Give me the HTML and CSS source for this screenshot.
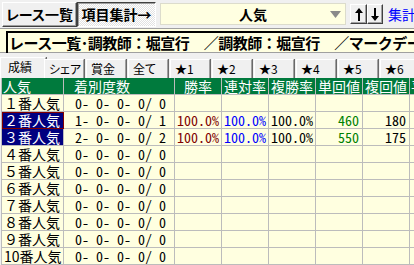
FILE: index.html
```html
<!DOCTYPE html>
<html lang="ja">
<head>
    <meta charset="UTF-8">
    <meta name="viewport" content="width=device-width, initial-scale=1.0">
    <title>項目集計</title>
    <link rel="stylesheet" href="styles.css">
</head>
<body>
    <div class="toolbar">
        <button class="btn btn-list">レース一覧</button>
        <button class="btn btn-on">項目集計→</button>
        <div class="combo">
            <span class="combo-text">人気</span>
            <svg class="combo-arrow" width="11" height="7" viewBox="0 0 11 7"><polygon points="0,0 11,0 5.5,7" fill="#8a8a8a"/></svg>
        </div>
        <div class="sort">
            <button class="sort-btn sort-up">
                <svg width="8" height="13" viewBox="0 0 8 13"><path d="M4 0 L8 5 H5 V13 H3 V5 H0 Z" fill="#000"/></svg>
            </button>
            <button class="sort-btn sort-down">
                <svg width="8" height="13" viewBox="0 0 8 13"><path d="M4 13 L8 8 H5 V0 H3 V8 H0 Z" fill="#000"/></svg>
            </button>
        </div>
        <span class="link">集計表示</span>
    </div>

    <div class="title">
        <div class="title-box">レース一覧･調教師：堀宣行　／調教師：堀宣行　／マークデータ</div>
    </div>

    <div class="tabs">
        <span class="tab tab-on">成績</span>
        <span class="tab">シェア</span>
        <span class="tab">賞金</span>
        <span class="tab">全て</span>
        <span class="tab">★1</span>
        <span class="tab">★2</span>
        <span class="tab">★3</span>
        <span class="tab">★4</span>
        <span class="tab">★5</span>
        <span class="tab">★6</span>
    </div>

    <div class="grid">
        <div class="cell head head-name">人気</div>
        <div class="cell head head-count">着別度数</div>
        <div class="cell head">勝率</div>
        <div class="cell head">連対率</div>
        <div class="cell head">複勝率</div>
        <div class="cell head">単回値</div>
        <div class="cell head">複回値</div>
        <div class="cell head head-cut">平均着順</div>

        <div class="cell name">１番人気</div>
        <div class="cell count">0- 0- 0- 0/ 0</div>
        <div class="cell"></div><div class="cell"></div><div class="cell"></div><div class="cell"></div><div class="cell"></div><div class="cell"></div>

        <div class="cell name name-sel name-focus">２番人気</div>
        <div class="cell count">1- 0- 0- 0/ 1</div>
        <div class="cell pct win">100.0%</div>
        <div class="cell pct place">100.0%</div>
        <div class="cell pct">100.0%</div>
        <div class="cell num ret">460</div>
        <div class="cell num">180</div>
        <div class="cell"></div>

        <div class="cell name name-sel">３番人気</div>
        <div class="cell count">2- 0- 0- 0/ 2</div>
        <div class="cell pct win">100.0%</div>
        <div class="cell pct place">100.0%</div>
        <div class="cell pct">100.0%</div>
        <div class="cell num ret">550</div>
        <div class="cell num">175</div>
        <div class="cell"></div>

        <div class="cell name">４番人気</div>
        <div class="cell count">0- 0- 0- 0/ 0</div>
        <div class="cell"></div><div class="cell"></div><div class="cell"></div><div class="cell"></div><div class="cell"></div><div class="cell"></div>

        <div class="cell name">５番人気</div>
        <div class="cell count">0- 0- 0- 0/ 0</div>
        <div class="cell"></div><div class="cell"></div><div class="cell"></div><div class="cell"></div><div class="cell"></div><div class="cell"></div>

        <div class="cell name">６番人気</div>
        <div class="cell count">0- 0- 0- 0/ 0</div>
        <div class="cell"></div><div class="cell"></div><div class="cell"></div><div class="cell"></div><div class="cell"></div><div class="cell"></div>

        <div class="cell name">７番人気</div>
        <div class="cell count">0- 0- 0- 0/ 0</div>
        <div class="cell"></div><div class="cell"></div><div class="cell"></div><div class="cell"></div><div class="cell"></div><div class="cell"></div>

        <div class="cell name">８番人気</div>
        <div class="cell count">0- 0- 0- 0/ 0</div>
        <div class="cell"></div><div class="cell"></div><div class="cell"></div><div class="cell"></div><div class="cell"></div><div class="cell"></div>

        <div class="cell name">９番人気</div>
        <div class="cell count">0- 0- 0- 0/ 0</div>
        <div class="cell"></div><div class="cell"></div><div class="cell"></div><div class="cell"></div><div class="cell"></div><div class="cell"></div>

        <div class="cell name">10番人気</div>
        <div class="cell count">0- 0- 0- 0/ 0</div>
        <div class="cell"></div><div class="cell"></div><div class="cell"></div><div class="cell"></div><div class="cell"></div><div class="cell"></div>
    </div>
</body>
</html>
```

FILE: styles.css
```css
body {
    margin: 0;
    background-color: #f0f0f0;
    font-family: "Noto Sans CJK JP", sans-serif;
    font-size: 14px;
    color: #000;
    overflow: hidden;
    white-space: nowrap;
}

/* top toolbar */
.toolbar {
    display: flex;
    align-items: center;
    height: 28px;
    padding-left: 2px;
}
.toolbar > * {
    flex-shrink: 0;
}
.btn {
    box-sizing: border-box;
    height: 25px;
    padding: 0;
    font-family: inherit;
    font-size: 14px;
    font-weight: bold;
    font-feature-settings: "palt";
    color: #000;
    background-color: #f0f0f0;
    border: 1px solid;
    border-color: #fff #404040 #404040 #fff;
    box-shadow: inset -1px -1px 0 #a0a0a0;
}
.btn-list {
    width: 75px;
}
.btn-on {
    width: 79px;
    border-color: #404040 #fff #fff #404040;
    box-shadow: inset 1px 1px 0 #a0a0a0;
    background: repeating-conic-gradient(#fff 0 25%, #e2e2e2 0 50%) 0 0 / 2px 2px;
}
.combo {
    box-sizing: border-box;
    display: flex;
    align-items: center;
    width: 186px;
    height: 22px;
    margin-left: 4px;
    padding-left: 15px;
    padding-right: 4px;
    background-color: #ffffe1;
    border: 1px solid #dcdccc;
}
.combo-text {
    flex: 1;
    text-align: center;
    font-weight: bold;
    font-size: 14px;
}
.sort {
    display: flex;
    margin-left: 4px;
}
.sort-btn {
    box-sizing: border-box;
    display: flex;
    align-items: center;
    justify-content: center;
    width: 17px;
    height: 20px;
    padding: 0;
    background-color: #f0f0f0;
    border: 1px solid;
    border-color: #fff #404040 #404040 #fff;
    box-shadow: inset -1px -1px 0 #a0a0a0;
}
.sort-down {
    width: 16px;
}
.link {
    margin-left: 5px;
    color: #0000ff;
    font-size: 14px;
}

/* condition line */
.title {
    box-sizing: border-box;
    height: 25px;
    padding: 2px 0 0 6px;
    background-color: #ffffe1;
    border-top: 1px solid #a0a0a0;
    border-bottom: 1px solid #a0a0a0;
}
.title-box {
    border-top: 2px solid #000;
    border-left: 2px solid #000;
    padding-left: 1px;
    height: 20px;
    line-height: 19px;
    font-size: 15px;
    font-weight: bold;
    letter-spacing: -0.5px;
}

/* tabs */
.tabs {
    display: flex;
    align-items: flex-end;
    height: 22px;
    margin-top: 3px;
    padding-left: 2px;
}
.tab {
    flex-shrink: 0;
    box-sizing: border-box;
    width: 40px;
    height: 19px;
    margin-right: 2px;
    padding: 1px 0 0 4px;
    font-size: 12px;
    font-feature-settings: "palt";
    line-height: 16px;
    background-color: #f0f0f0;
    border-top: 1px solid #fff;
    border-left: 1px solid #fff;
    border-right: 1px solid #a0a0a0;
    box-shadow: 1px 0 0 #696969;
}
.tab-on {
    width: 46px;
    height: 21px;
    margin: 0 -2px 0 -2px;
    padding-left: 7px;
}

/* result grid */
.grid {
    display: grid;
    grid-template-columns: 62px 111px repeat(6, 47px);
    grid-auto-rows: 17px;
    width: max-content;
    margin-left: 1px;
    border-left: 1px solid #bcbcbc;
}
.cell {
    box-sizing: border-box;
    height: 17px;
    overflow: hidden;
    white-space: pre;
    line-height: 16px;
    font-size: 14px;
    background-color: #ffffe0;
    border-right: 1px solid #bcbcbc;
    border-bottom: 1px solid #bcbcbc;
}
.head {
    background-color: #007a3d;
    color: #fff;
    text-align: center;
}
.head-name {
    text-align: left;
    padding-left: 1px;
}
.head-count {
    text-align: left;
    padding-left: 10px;
}
.head-cut {
    text-align: left;
    padding-left: 1px;
}
.name {
    padding-left: 2px;
}
.name-sel {
    background-color: #000080;
    color: #fff;
}
.name-focus {
    outline: 1px solid #800000;
    outline-offset: -1px;
}
.count,
.pct,
.num {
    font-size: 14px;
    font-feature-settings: "hwid";
}
.count {
    padding-left: 11px;
}
.pct {
    padding-left: 2px;
}
.num {
    text-align: right;
    padding-right: 3px;
}
.win {
    color: #800000;
}
.place {
    color: #0000ff;
}
.ret {
    color: #008000;
}
```
